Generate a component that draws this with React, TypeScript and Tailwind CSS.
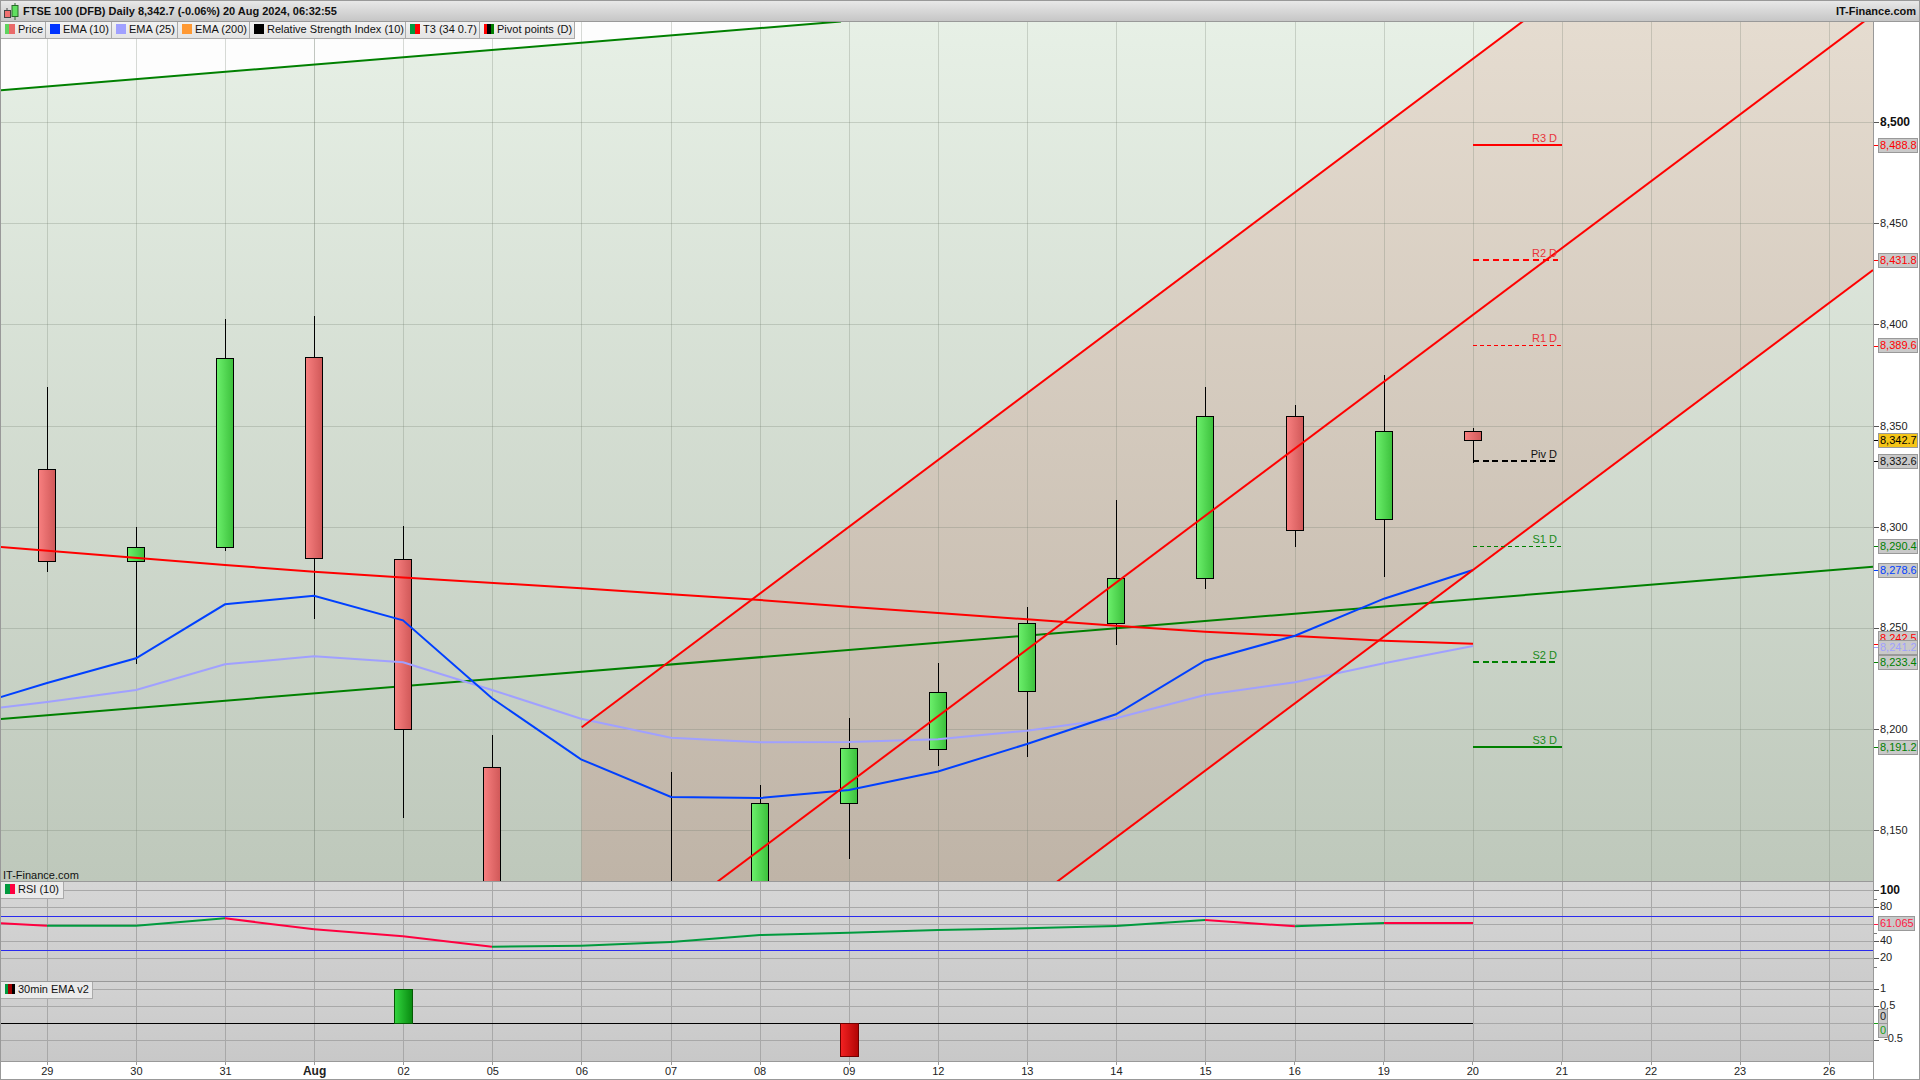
import React from "react";

const GX = [47.5,136.5,225.5,314.5,403.5,492.5,581.5,671.5,760.5,849.5,938.5,1027.5,1116.5,1205.5,1295.5,1384.5,1473.5,1562.5,1651.5,1740.5,1829.5];
const MAINY = [122.5,223.5,324.5,426.5,527.5,628.5,729.5,830.5];
const [X29,X30,X31,XAUG,X02,X05,X06,X07,X08,X09,X12,X13,X14,X15,X16,X19,X20] = GX;

const pts = (a: number[][]) => a.map((p) => p.join(",")).join(" ");

const T3: number[][] = [[0,547],[225,565],[314,571.7],[403,577.5],[581,588.3],[671,594.3],[760,600],[849,606.7],[938,613],[1027,619.3],[1116,625.7],[1205,631.7],[1295,636],[1384,640.7],[1473,643.7]];
const EMA10: number[][] = [[0,697.3],[47,683],[136,658.3],[225,604.3],[314,595.7],[403,620.3],[492,698.3],[581,759.3],[671,797],[760,798],[849,790],[938,771.5],[1027,744],[1116,714.3],[1205,660.7],[1295,635.7],[1384,598.7],[1473,570]];
const EMA25: number[][] = [[0,707.7],[47,702],[136,690],[225,664.3],[314,656.3],[403,662.3],[492,690],[581,718.7],[671,737.7],[760,742.3],[849,742],[938,739.3],[1027,730.7],[1116,718.3],[1205,695],[1295,682.3],[1384,663.3],[1473,646]];

type C = { x: number; t: number; b: number; h: number; l: number; up: boolean };
const CANDLES: C[] = [
  { x: X29, t: 469, b: 561, h: 387, l: 572, up: false },
  { x: X30, t: 547, b: 561, h: 527, l: 664, up: true },
  { x: X31, t: 358, b: 547, h: 319, l: 551, up: true },
  { x: XAUG, t: 357, b: 558, h: 316, l: 619, up: false },
  { x: X02, t: 559, b: 729, h: 526, l: 818, up: false },
  { x: X05, t: 767, b: 900, h: 735, l: 900, up: false },
  { x: X07, t: 900, b: 910, h: 772, l: 900, up: false },
  { x: X08, t: 803, b: 900, h: 785, l: 900, up: true },
  { x: X09, t: 748, b: 803, h: 718, l: 859, up: true },
  { x: X12, t: 692, b: 749, h: 663, l: 766, up: true },
  { x: X13, t: 623, b: 691, h: 607, l: 757, up: true },
  { x: X14, t: 578, b: 623, h: 500, l: 645, up: true },
  { x: X15, t: 416, b: 578, h: 387, l: 589, up: true },
  { x: X16, t: 416, b: 530, h: 405, l: 547, up: false },
  { x: X19, t: 431, b: 519, h: 375, l: 577, up: true },
  { x: X20, t: 431, b: 440, h: 428, l: 463, up: false },
];

const RSI: number[][] = [[0,923.3],[47,925.7],[136,925.7],[225,918.3],[314,929.3],[403,936.3],[492,946.7],[581,945.7],[671,942],[760,935],[849,932.7],[938,930],[1027,928.3],[1116,926],[1205,920],[1295,926.3],[1384,923],[1473,923]];
const rsiUp = (i: number) => (i >= 1 && i < 3) || (i >= 6 && i < 14) || i === 15;

const LEVELS = [
  { n: "R3 D", y: 144.5, c: "#ff0000", tc: "#e8343a", w: 2, d: "", e: 1562, o: 2.5 },
  { n: "R2 D", y: 259.5, c: "#ff0000", tc: "#e8343a", w: 2, d: "6 4", e: 1558, o: 2.5 },
  { n: "R1 D", y: 345.5, c: "#ff0000", tc: "#e8343a", w: 1, d: "4 3", e: 1562, o: 3.5 },
  { n: "Piv D", y: 461, c: "#000000", tc: "#111111", w: 2, d: "6 3.5", e: 1558, o: 3 },
  { n: "S1 D", y: 546.5, c: "#008000", tc: "#1a8a1a", w: 1, d: "4 3", e: 1562, o: 3.5 },
  { n: "S2 D", y: 662, c: "#008000", tc: "#1a8a1a", w: 2, d: "6 3.5", e: 1558, o: 3 },
  { n: "S3 D", y: 747, c: "#008000", tc: "#1a8a1a", w: 2, d: "", e: 1562, o: 3 },
];

const AXIS = [
  { t: "8,500", y: 122, b: true }, { t: "8,450", y: 223 }, { t: "8,400", y: 324 }, { t: "8,350", y: 426 },
  { t: "8,300", y: 527 }, { t: "8,250", y: 627 }, { t: "8,200", y: 729 }, { t: "8,150", y: 830 },
  { t: "100", y: 890, b: true }, { t: "80", y: 906 }, { t: "40", y: 940 }, { t: "20", y: 957 },
  { t: "1", y: 988 }, { t: "0.5", y: 1005 }, { t: "-0.5", y: 1038, left: 1884 },
];

const MINOR = [899, 933, 967];
const MAJOR = [122, 223, 324, 426, 527, 628, 729, 830, 890, 907, 924, 941, 958, 989, 1006, 1040];

const TAGS = [
  { t: "8,488.8", y: 145, cls: "w-[40px] text-[#ff0000] bg-[#c9c9c9]", tick: "bg-[#ff0000]" },
  { t: "8,431.8", y: 260, cls: "w-[40px] text-[#ff0000] bg-[#c9c9c9]", tick: "bg-[#ff0000]" },
  { t: "8,389.6", y: 345.5, cls: "w-[40px] text-[#ff0000] bg-[#c9c9c9]", tick: "bg-[#ff0000]" },
  { t: "8,342.7", y: 440, cls: "w-[40px] text-black bg-[#f5c518]", tick: "bg-black" },
  { t: "8,332.6", y: 461, cls: "w-[40px] text-[#111111] bg-[#c9c9c9]", tick: "bg-black" },
  { t: "8,290.4", y: 546, cls: "w-[40px] text-[#008000] bg-[#c9c9c9]", tick: "bg-[#008000]" },
  { t: "8,278.6", y: 570, cls: "w-[40px] text-[#0040ff] bg-[#c9c9c9]", tick: "bg-[#0040ff]" },
  { t: "8,242.5", y: 638.5, cls: "w-[40px] text-[#ff0000] bg-[#c9c9c9]", tick: "bg-[#ff0000]", tickY: 644 },
  { t: "8,241.2", y: 647, cls: "w-[40px] text-[#a0a0ff] bg-[#c9c9c9]", tick: "bg-[#a0a0ff]" },
  { t: "8,233.4", y: 662, cls: "w-[40px] text-[#008000] bg-[#c9c9c9]", tick: "bg-[#008000]" },
  { t: "8,191.2", y: 747, cls: "w-[40px] text-[#008000] bg-[#c9c9c9]", tick: "bg-[#008000]" },
  { t: "61.065", y: 923.5, cls: "w-[37px] text-[#ff1744] bg-[#c9c9c9]", tick: "bg-[#ff1744]" },
  { t: "0", y: 1016, cls: "w-[10px] text-[#222222] bg-[#c9c9c9]", tick: "bg-black", tickY: 1023 },
  { t: "0", y: 1030, cls: "w-[10px] text-[#16a016] bg-[#c9c9c9]", tick: "bg-[#16a016]", tickY: 1023 },
];

const XLABELS = ["29","30","31","Aug","02","05","06","07","08","09","12","13","14","15","16","19","20","21","22","23","26"];

const LEGEND = [
  { t: "Price", w: "w-[45px]", icon: <><i className="w-[4px] bg-[#5fd35f]" /><i className="w-[6px] bg-[#e96a6a]" /></> },
  { t: "EMA (10)", w: "w-[66px]", icon: <i className="w-[10px] bg-[#0033ff]" /> },
  { t: "EMA (25)", w: "w-[66px]", icon: <i className="w-[10px] bg-[#a0a0ff]" /> },
  { t: "EMA (200)", w: "w-[72px]", icon: <i className="w-[10px] bg-[#ff9933]" /> },
  { t: "Relative Strength Index (10)", w: "w-[156px]", icon: <i className="w-[10px] bg-black" /> },
  { t: "T3 (34 0.7)", w: "w-[74px]", icon: <><i className="w-[5px] bg-[#009a3e]" /><i className="w-[5px] bg-[#ff0000]" /></> },
  { t: "Pivot points (D)", w: "w-[95px]", icon: <><i className="w-[3px] bg-[#ff0000]" /><i className="w-[4px] bg-black" /><i className="w-[3px] bg-[#008000]" /></> },
];

function MainPane() {
  return (
    <div className="relative h-[860px] border-b border-[#999999] bg-gradient-to-b from-[#e7f0e6] to-[#bec8bb]">
      <svg className="block w-[1872px] h-[859px]" viewBox="1 22 1872 859">
        <defs>
          <linearGradient id="band" x1="0" y1="22" x2="0" y2="881" gradientUnits="userSpaceOnUse">
            <stop offset="0" stopColor="#e5dcd0" />
            <stop offset="1" stopColor="#bfb4a7" />
          </linearGradient>
          <linearGradient id="up" x1="0" y1="0" x2="1" y2="0">
            <stop offset="0" stopColor="#6cf06c" />
            <stop offset="1" stopColor="#3cc03c" />
          </linearGradient>
          <linearGradient id="down" x1="0" y1="0" x2="1" y2="0">
            <stop offset="0" stopColor="#f88080" />
            <stop offset="1" stopColor="#d05858" />
          </linearGradient>
        </defs>
        <polygon points="0,90.3 841,21.5 841,20 0,20" fill="#fdfdfd" />
        <polygon points={pts([[581.5,727.3],[581.5,890],[1046,890],[1873,270],[1873,20],[1526,20]])} fill="url(#band)" />
        <g stroke="#6e7a6c" strokeWidth="1" shapeRendering="crispEdges">
          {GX.map((x) => <line key={x} x1={x} x2={x} y1="22" y2="881" strokeOpacity={x === XAUG ? 0.42 : 0.27} />)}
          {MAINY.map((y) => <line key={y} x1="0" x2="1873" y1={y} y2={y} strokeOpacity="0.27" />)}
        </g>
        <polyline points="0,90.3 841,21.5" fill="none" stroke="#008000" strokeWidth="2" />
        <polyline points="0,719 1873,566.7" fill="none" stroke="#008000" strokeWidth="2" />
        {CANDLES.map((c) => (
          <g key={c.x}>
            <line x1={c.x} x2={c.x} y1={c.h} y2={c.l} stroke="#000" strokeWidth="1" shapeRendering="crispEdges" />
            <rect x={c.x - 9} y={c.t + 0.5} width="17" height={c.b - c.t} fill={c.up ? "url(#up)" : "url(#down)"} stroke="#000" strokeWidth="1" shapeRendering="crispEdges" />
          </g>
        ))}
        <polyline points={pts(T3)} fill="none" stroke="#ff0000" strokeWidth="2" />
        <polyline points={pts(EMA25)} fill="none" stroke="#a0a0ff" strokeWidth="2" />
        <polyline points={pts(EMA10)} fill="none" stroke="#0040ff" strokeWidth="2" />
        <g fill="none" stroke="#ff0000" strokeWidth="2">
          <line x1="581.7" y1="727.3" x2="1526" y2="19" />
          <line x1="700" y1="894.8" x2="1870" y2="17" />
          <line x1="1046" y1="890" x2="1873" y2="270" />
        </g>
        {LEVELS.map((l) => (
          <g key={l.n}>
            <line x1="1473" x2={l.e} y1={l.y} y2={l.y} stroke={l.c} strokeWidth={l.w} strokeDasharray={l.d || undefined} shapeRendering="crispEdges" />
            <text x="1557" y={l.y - l.o} textAnchor="end" fontSize="11" fill={l.tc}>{l.n}</text>
          </g>
        ))}
      </svg>
      <div className="absolute top-0 left-0 flex h-[17px] border-b border-[#aaaaaa] text-[11px] leading-[14px] text-[#111111]">
        {LEGEND.map((l) => (
          <div key={l.t} className={`${l.w} flex items-center gap-[3px] pb-[2px] pl-[4px] border-r border-[#aaaaaa] bg-gradient-to-b from-[#f2f2f2] to-[#e4e4e4] whitespace-nowrap`}>
            <span className="flex h-[10px] w-[10px] shrink-0">{l.icon}</span>
            <span>{l.t}</span>
          </div>
        ))}
      </div>
      <div className="absolute left-[2px] bottom-[-1px] text-[11px] leading-[13px] text-[#111111]">IT-Finance.com</div>
    </div>
  );
}

function RsiPane() {
  return (
    <div className="relative h-[100px] border-b border-[#999999] bg-gradient-to-b from-[#d6d6d6] to-[#cccccc]">
      <svg className="block w-[1872px] h-[99px]" viewBox="1 882 1872 99">
        <g stroke="#a8a8a8" strokeWidth="1" shapeRendering="crispEdges">
          {GX.map((x) => <line key={x} x1={x} x2={x} y1="882" y2="981" />)}
          {[890.5, 907.5, 924.5, 941.5, 958.5].map((y) => <line key={y} x1="0" x2="1873" y1={y} y2={y} />)}
        </g>
        <g stroke="#2a2aee" strokeWidth="1" shapeRendering="crispEdges">
          <line x1="0" x2="1873" y1="916.5" y2="916.5" />
          <line x1="0" x2="1873" y1="950.5" y2="950.5" />
        </g>
        {RSI.slice(0, -1).map((p, i) => (
          <line key={i} x1={p[0]} y1={p[1]} x2={RSI[i + 1][0]} y2={RSI[i + 1][1]} stroke={rsiUp(i) ? "#009a3e" : "#ff0040"} strokeWidth="2" />
        ))}
      </svg>
      <div className="absolute top-0 left-0 flex items-center gap-[3px] h-[17px] w-[63px] pb-[2px] pl-[4px] border-r border-b border-[#aaaaaa] bg-[#ebebeb] text-[11px] leading-[14px] text-[#111111] whitespace-nowrap">
        <span className="flex h-[10px] w-[10px] shrink-0"><i className="w-[5px] bg-[#009a3e]" /><i className="w-[5px] bg-[#ff0040]" /></span>
        <span>RSI (10)</span>
      </div>
    </div>
  );
}

function EmaPane() {
  return (
    <div className="relative h-[80px] border-b border-[#999999] bg-gradient-to-b from-[#d2d2d2] to-[#c8c8c8]">
      <svg className="block w-[1872px] h-[79px]" viewBox="1 982 1872 79">
        <defs>
          <linearGradient id="gbar" x1="0" y1="0" x2="1" y2="0">
            <stop offset="0" stopColor="#33d63f" />
            <stop offset="1" stopColor="#088a10" />
          </linearGradient>
          <linearGradient id="rbar" x1="0" y1="0" x2="1" y2="0">
            <stop offset="0" stopColor="#f42222" />
            <stop offset="1" stopColor="#b00404" />
          </linearGradient>
        </defs>
        <g stroke="#a8a8a8" strokeWidth="1" shapeRendering="crispEdges">
          {GX.map((x) => <line key={x} x1={x} x2={x} y1="982" y2="1061" />)}
          {[989.5, 1006.5, 1023.5, 1040.5].map((y) => <line key={y} x1="0" x2="1873" y1={y} y2={y} />)}
        </g>
        <line x1="0" x2="1473" y1="1023.5" y2="1023.5" stroke="#000" strokeWidth="1" shapeRendering="crispEdges" />
        <rect x="394.5" y="989.5" width="18" height="34" fill="url(#gbar)" stroke="#055a05" strokeWidth="1" shapeRendering="crispEdges" />
        <rect x="840.5" y="1023.5" width="18" height="33" fill="url(#rbar)" stroke="#6e0000" strokeWidth="1" shapeRendering="crispEdges" />
      </svg>
      <div className="absolute top-0 left-0 flex items-center gap-[3px] h-[17px] w-[92px] pb-[2px] pl-[4px] border-r border-b border-[#aaaaaa] bg-[#ebebeb] text-[11px] leading-[14px] text-[#111111] whitespace-nowrap">
        <span className="flex h-[10px] w-[10px] shrink-0"><i className="w-[3px] bg-[#009a3e]" /><i className="w-[4px] bg-[#a00000]" /><i className="w-[3px] bg-black" /></span>
        <span>30min EMA v2</span>
      </div>
    </div>
  );
}

function RightAxis() {
  return (
    <div className="relative flex-1 bg-white text-[11px] text-[#222222]">
      {MINOR.map((y) => <div key={y} className="absolute left-0 w-[3px] h-px bg-[#777777]" style={{ top: y - 22 }} />)}
      {MAJOR.map((y) => <div key={y} className="absolute left-0 w-[5px] h-px bg-[#555555]" style={{ top: y - 22 }} />)}
      {AXIS.map((a) => (
        <div
          key={a.t}
          className={a.b ? "absolute leading-[14px] whitespace-nowrap font-bold text-[12px] text-[#111111]" : "absolute leading-[14px] whitespace-nowrap"}
          style={{ top: a.y - 22 - 7, left: (a.left ?? 1880) - 1874 }}
        >
          {a.t}
        </div>
      ))}
      {TAGS.map((t, i) => (
        <React.Fragment key={i}>
          <div className={`absolute left-0 w-[5px] h-px ${t.tick}`} style={{ top: Math.round((t.tickY ?? t.y) - 22) }} />
          <div
            className={`absolute left-[4px] h-[15px] border border-[#999999] pl-[1px] leading-[13px] whitespace-nowrap ${t.cls}`}
            style={{ top: t.y - 22 - 7.5 }}
          >
            {t.t}
          </div>
        </React.Fragment>
      ))}
    </div>
  );
}

export default function App() {
  return (
    <div className="flex h-[1080px] w-[1920px] flex-col overflow-hidden border border-[#999999] bg-white font-['Liberation_Sans',Arial,sans-serif]">
      <header className="flex h-[21px] shrink-0 items-center justify-between border-b border-[#999999] bg-gradient-to-b from-[#e8e8e8] to-[#c6c6c6] pl-[2px] pr-[3px]">
        <div className="flex items-center gap-[4px]">
          <svg width="16" height="18" viewBox="0 0 16 18" className="shrink-0">
            <line x1="4" x2="4" y1="6" y2="16" stroke="#444" />
            <rect x="1.5" y="8.5" width="6" height="7" fill="#f07070" stroke="#444" />
            <line x1="12" x2="12" y1="1" y2="18" stroke="#2a6a2a" />
            <rect x="9" y="3.5" width="6" height="11" fill="#5fe05f" stroke="#2a6a2a" />
          </svg>
          <span className="text-[11px] font-bold leading-[20px] text-[#111111] whitespace-nowrap">FTSE 100 (DFB) Daily 8,342.7 (-0.06%) 20 Aug 2024, 06:32:55</span>
        </div>
        <span className="text-[11px] font-bold leading-[20px] text-[#111111]">IT-Finance.com</span>
      </header>
      <div className="flex min-h-0 flex-1">
        <div className="flex w-[1873px] shrink-0 flex-col border-r border-[#999999]">
          <MainPane />
          <RsiPane />
          <EmaPane />
          <div className="flex flex-1 pl-[1.8px] text-[11px] leading-[13px] text-[#222222]">
            {XLABELS.map((l) => (
              <div key={l} className="flex w-[89.1px] shrink-0 flex-col items-center">
                <i className="h-[3px] w-px bg-[#999999]" />
                <span className={l === "Aug" ? "font-bold text-[12px]" : ""}>{l}</span>
              </div>
            ))}
          </div>
        </div>
        <RightAxis />
      </div>
    </div>
  );
}
